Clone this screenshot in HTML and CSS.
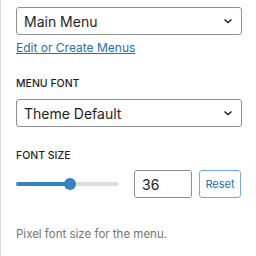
FILE: index.html
```html
<!DOCTYPE html>
<html lang="en">
<head>
    <meta charset="UTF-8">
    <meta name="viewport" content="width=device-width, initial-scale=1.0">
    <title>Menu Settings</title>
    <link rel="stylesheet" href="styles.css">
</head>
<body>
    <div class="panel">
        <div class="select-wrap">
            <select class="select" id="menu">
                <option>Main Menu</option>
            </select>
            <svg class="chevron" width="12" height="8" viewBox="0 0 12 8"><path d="M2.5 2.5l3.5 3 3.5-3" fill="none" stroke="#1e1e1e" stroke-width="1.4"/></svg>
        </div>
        <a href="#" class="edit-link">Edit or Create Menus</a>

        <label class="label" for="font">Menu Font</label>
        <div class="select-wrap">
            <select class="select" id="font">
                <option>Theme Default</option>
            </select>
            <svg class="chevron" width="12" height="8" viewBox="0 0 12 8"><path d="M2.5 2.5l3.5 3 3.5-3" fill="none" stroke="#1e1e1e" stroke-width="1.4"/></svg>
        </div>

        <label class="label label-size" for="size">Font Size</label>
        <div class="size-row">
            <div class="slider">
                <div class="track"></div>
                <div class="fill" style="width: 54px;"></div>
                <div class="thumb" style="left: 48px;"></div>
            </div>
            <input type="text" class="number" id="size" value="36">
            <button class="reset">Reset</button>
        </div>

        <p class="help">Pixel font size for the menu.</p>
    </div>
</body>
</html>
```

FILE: styles.css
```css
body {
    margin: 0;
    font-family: Inter, "Liberation Sans", sans-serif;
    background-color: #fff;
    color: #1e1e1e;
}
.panel {
    box-sizing: border-box;
    min-height: 256px;
    border-left: 1px solid #dcdcde;
    padding: 7px 14px 0 15px;
}
.select-wrap {
    position: relative;
}
.select {
    appearance: none;
    -webkit-appearance: none;
    display: block;
    width: 100%;
    height: 28px;
    margin: 0;
    padding: 0 24px 0 7px;
    border: 1px solid #8c8f94;
    border-radius: 3px;
    background: #fff;
    font-family: inherit;
    font-size: 14px;
    color: #1e1e1e;
}
.chevron {
    position: absolute;
    right: 8px;
    top: 10px;
}
.edit-link {
    display: block;
    width: fit-content;
    margin-top: 4px;
    font-size: 12px;
    line-height: 18px;
    color: #2271b1;
    text-decoration: underline;
}
.label {
    display: block;
    margin: 20px 0 8px;
    font-size: 10.5px;
    line-height: 14px;
    font-weight: 500;
    text-transform: uppercase;
    color: #1e1e1e;
}
.label-size {
    margin: 22px 0 7px;
}
.size-row {
    display: flex;
    align-items: center;
}
.slider {
    position: relative;
    flex: 0 0 103px;
    height: 28px;
}
.track {
    position: absolute;
    left: 0;
    right: 0;
    top: 12px;
    height: 4px;
    border-radius: 2px;
    background: #dddddd;
}
.fill {
    position: absolute;
    left: 0;
    top: 12px;
    height: 4px;
    border-radius: 2px;
    background: #3582c4;
}
.thumb {
    position: absolute;
    top: 8px;
    width: 12px;
    height: 12px;
    border-radius: 50%;
    background: #3582c4;
}
.number {
    box-sizing: border-box;
    width: 58px;
    height: 28px;
    margin-left: 15px;
    padding: 0 7px;
    border: 1px solid #8c8f94;
    border-radius: 3px;
    font-family: inherit;
    font-size: 14px;
    color: #1e1e1e;
}
.reset {
    box-sizing: border-box;
    width: 42px;
    height: 28px;
    margin-left: 7px;
    padding: 0;
    border: 1px solid #72aee6;
    border-radius: 3px;
    background: #fff;
    font-family: inherit;
    font-size: 11px;
    color: #2271b1;
}
.help {
    margin: 28px 0 0;
    font-size: 11.5px;
    line-height: 16px;
    color: #757575;
}
```
